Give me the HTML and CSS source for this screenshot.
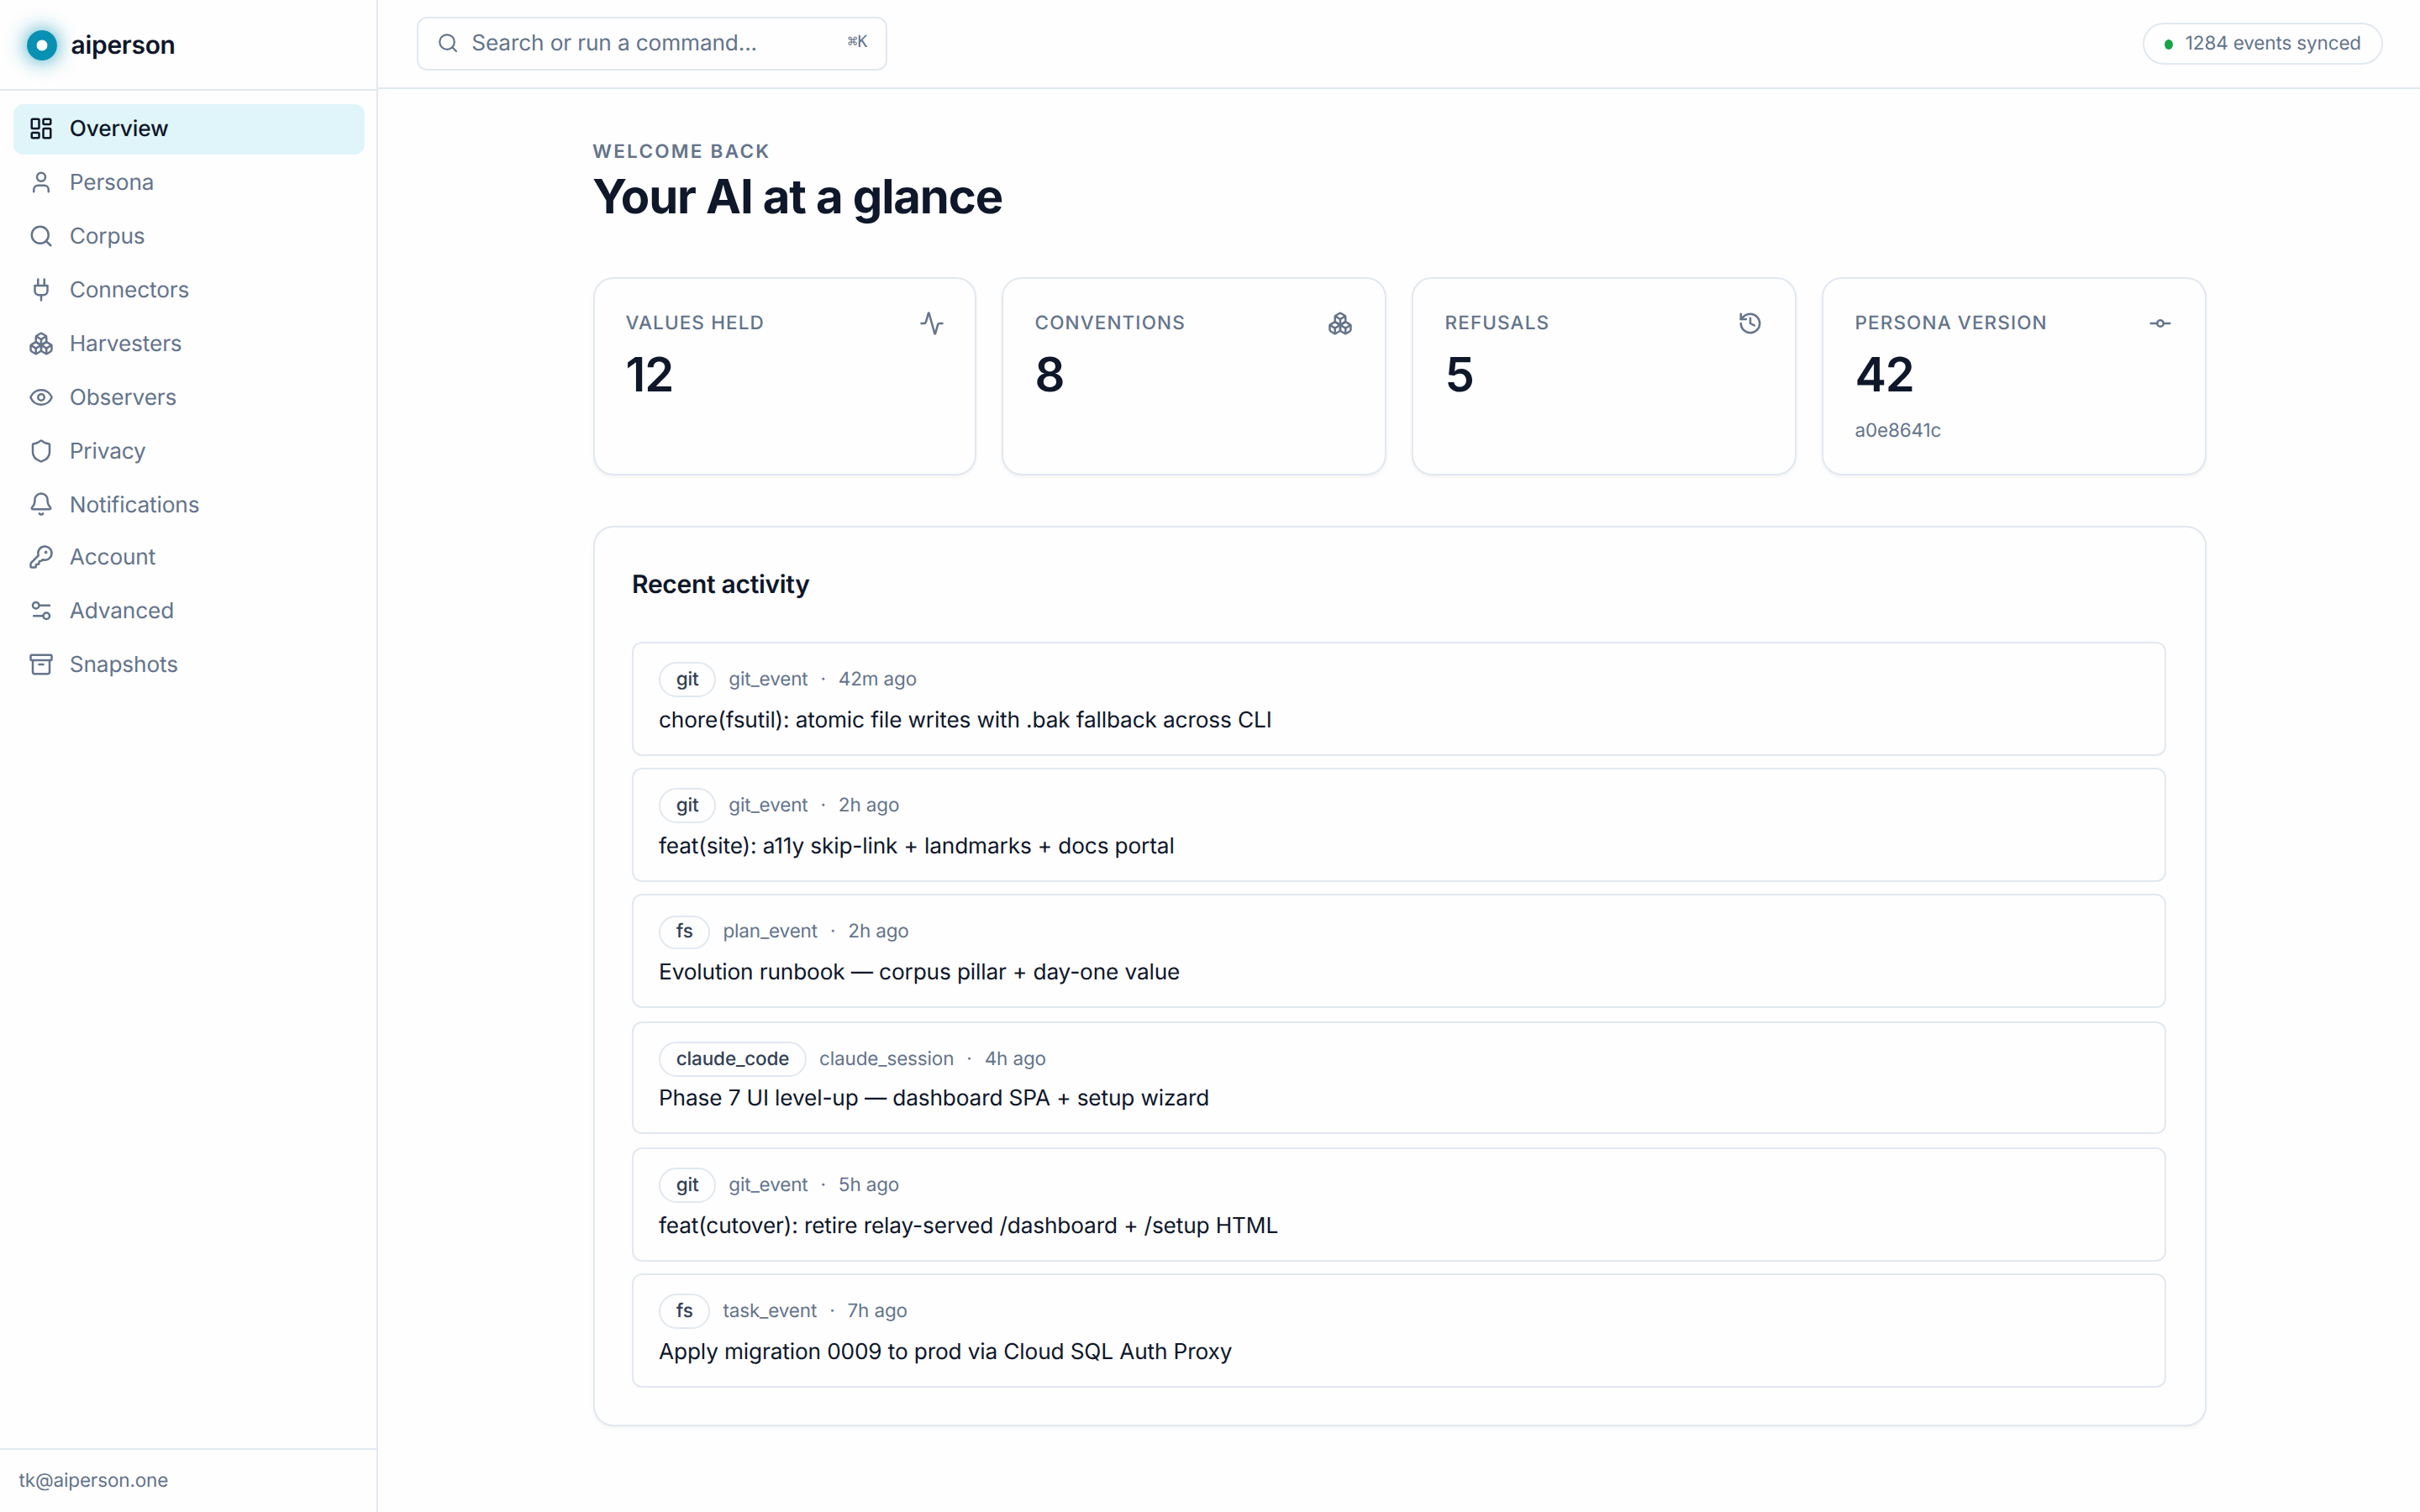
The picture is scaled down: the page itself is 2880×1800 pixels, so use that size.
FILE: index.html
```html
<!DOCTYPE html>
<html lang="en">
<head>
  <meta charset="UTF-8" />
  <meta name="viewport" content="width=device-width, initial-scale=1" />
  <title>aiperson</title>
  <link rel="stylesheet" href="styles.css">
</head>
<body>
  <div class="app">
    <aside class="sidebar">
      <div class="brand">
        <span class="brand-mark"></span>
        <span class="brand-name">aiperson</span>
      </div>
      <nav class="nav">
        <a class="nav-item active">
          <svg class="icon" viewBox="0 0 24 24"><rect width="7" height="9" x="3" y="3" rx="1"/><rect width="7" height="5" x="14" y="3" rx="1"/><rect width="7" height="9" x="14" y="12" rx="1"/><rect width="7" height="5" x="3" y="16" rx="1"/></svg>
          <span>Overview</span>
        </a>
        <a class="nav-item">
          <svg class="icon" viewBox="0 0 24 24"><path d="M19 21v-2a4 4 0 0 0-4-4H9a4 4 0 0 0-4 4v2"/><circle cx="12" cy="7" r="4"/></svg>
          <span>Persona</span>
        </a>
        <a class="nav-item">
          <svg class="icon" viewBox="0 0 24 24"><circle cx="11" cy="11" r="8"/><path d="m21 21-4.3-4.3"/></svg>
          <span>Corpus</span>
        </a>
        <a class="nav-item">
          <svg class="icon" viewBox="0 0 24 24"><path d="M12 22v-5"/><path d="M9 8V2"/><path d="M15 8V2"/><path d="M18 8v5a4 4 0 0 1-4 4h-4a4 4 0 0 1-4-4V8Z"/></svg>
          <span>Connectors</span>
        </a>
        <a class="nav-item">
          <svg class="icon" viewBox="0 0 24 24"><path d="M2.97 12.92A2 2 0 0 0 2 14.63v3.24a2 2 0 0 0 .97 1.71l3 1.8a2 2 0 0 0 2.06 0L12 19v-5.5l-5-3-4.03 2.42Z"/><path d="m7 16.5-4.74-2.85"/><path d="m7 16.5 5-3"/><path d="M7 16.5v5.17"/><path d="M12 13.5V19l3.97 2.38a2 2 0 0 0 2.06 0l3-1.8a2 2 0 0 0 .97-1.71v-3.24a2 2 0 0 0-.97-1.71L17 10.5l-5 3Z"/><path d="m17 16.5-5-3"/><path d="m17 16.5 4.74-2.85"/><path d="M17 16.5v5.17"/><path d="M7.97 4.42A2 2 0 0 0 7 6.13v4.37l5 3 5-3V6.13a2 2 0 0 0-.97-1.71l-3-1.8a2 2 0 0 0-2.06 0l-3 1.8Z"/><path d="M12 8 7.26 5.15"/><path d="m12 8 4.74-2.85"/><path d="M12 13.5V8"/></svg>
          <span>Harvesters</span>
        </a>
        <a class="nav-item">
          <svg class="icon" viewBox="0 0 24 24"><path d="M2.062 12.348a1 1 0 0 1 0-.696 10.75 10.75 0 0 1 19.876 0 1 1 0 0 1 0 .696 10.75 10.75 0 0 1-19.876 0"/><circle cx="12" cy="12" r="3"/></svg>
          <span>Observers</span>
        </a>
        <a class="nav-item">
          <svg class="icon" viewBox="0 0 24 24"><path d="M20 13c0 5-3.5 7.5-7.66 8.95a1 1 0 0 1-.67-.01C7.5 20.5 4 18 4 13V6a1 1 0 0 1 1-1c2 0 4.5-1.2 6.24-2.72a1.17 1.17 0 0 1 1.52 0C14.51 3.81 17 5 19 5a1 1 0 0 1 1 1z"/></svg>
          <span>Privacy</span>
        </a>
        <a class="nav-item">
          <svg class="icon" viewBox="0 0 24 24"><path d="M10.268 21a2 2 0 0 0 3.464 0"/><path d="M3.262 15.326A1 1 0 0 0 4 17h16a1 1 0 0 0 .74-1.673C19.41 13.956 18 12.499 18 8A6 6 0 0 0 6 8c0 4.499-1.411 5.956-2.738 7.326"/></svg>
          <span>Notifications</span>
        </a>
        <a class="nav-item">
          <svg class="icon" viewBox="0 0 24 24"><path d="M2.586 17.414A2 2 0 0 0 2 18.828V21a1 1 0 0 0 1 1h3a1 1 0 0 0 1-1v-1a1 1 0 0 1 1-1h1a1 1 0 0 0 1-1v-1a1 1 0 0 1 1-1h.172a2 2 0 0 0 1.414-.586l.814-.814a6.5 6.5 0 1 0-4-4z"/><circle cx="16.5" cy="7.5" r=".5" fill="currentColor"/></svg>
          <span>Account</span>
        </a>
        <a class="nav-item">
          <svg class="icon" viewBox="0 0 24 24"><path d="M20 7h-9"/><path d="M14 17H5"/><circle cx="17" cy="17" r="3"/><circle cx="7" cy="7" r="3"/></svg>
          <span>Advanced</span>
        </a>
        <a class="nav-item">
          <svg class="icon" viewBox="0 0 24 24"><rect width="20" height="5" x="2" y="3" rx="1"/><path d="M4 8v11a2 2 0 0 0 2 2h12a2 2 0 0 0 2-2V8"/><path d="M10 12h4"/></svg>
          <span>Snapshots</span>
        </a>
      </nav>
      <div class="sidebar-footer">tk@aiperson.one</div>
    </aside>

    <div class="page">
      <header class="topbar">
        <button class="search">
          <svg class="icon icon-sm" viewBox="0 0 24 24"><circle cx="11" cy="11" r="8"/><path d="m21 21-4.3-4.3"/></svg>
          <span>Search or run a command...</span>
          <kbd>⌘K</kbd>
        </button>
        <div class="sync"><span class="dot"></span>1284 events synced</div>
      </header>

      <main class="content">
        <p class="eyebrow">Welcome back</p>
        <h1>Your AI at a glance</h1>

        <section class="stats">
          <div class="card stat">
            <div class="stat-head">
              <span>Values held</span>
              <svg class="icon" viewBox="0 0 24 24"><path d="M22 12h-2.48a2 2 0 0 0-1.93 1.46l-2.35 8.36a.25.25 0 0 1-.48 0L9.24 2.18a.25.25 0 0 0-.48 0l-2.35 8.36A2 2 0 0 1 4.49 12H2"/></svg>
            </div>
            <div class="stat-value">12</div>
          </div>
          <div class="card stat">
            <div class="stat-head">
              <span>Conventions</span>
              <svg class="icon" viewBox="0 0 24 24"><path d="M2.97 12.92A2 2 0 0 0 2 14.63v3.24a2 2 0 0 0 .97 1.71l3 1.8a2 2 0 0 0 2.06 0L12 19v-5.5l-5-3-4.03 2.42Z"/><path d="m7 16.5-4.74-2.85"/><path d="m7 16.5 5-3"/><path d="M7 16.5v5.17"/><path d="M12 13.5V19l3.97 2.38a2 2 0 0 0 2.06 0l3-1.8a2 2 0 0 0 .97-1.71v-3.24a2 2 0 0 0-.97-1.71L17 10.5l-5 3Z"/><path d="m17 16.5-5-3"/><path d="m17 16.5 4.74-2.85"/><path d="M17 16.5v5.17"/><path d="M7.97 4.42A2 2 0 0 0 7 6.13v4.37l5 3 5-3V6.13a2 2 0 0 0-.97-1.71l-3-1.8a2 2 0 0 0-2.06 0l-3 1.8Z"/><path d="M12 8 7.26 5.15"/><path d="m12 8 4.74-2.85"/><path d="M12 13.5V8"/></svg>
            </div>
            <div class="stat-value">8</div>
          </div>
          <div class="card stat">
            <div class="stat-head">
              <span>Refusals</span>
              <svg class="icon" viewBox="0 0 24 24"><path d="M3 12a9 9 0 1 0 9-9 9.75 9.75 0 0 0-6.74 2.74L3 8"/><path d="M3 3v5h5"/><path d="M12 7v5l4 2"/></svg>
            </div>
            <div class="stat-value">5</div>
          </div>
          <div class="card stat">
            <div class="stat-head">
              <span>Persona version</span>
              <svg class="icon" viewBox="0 0 24 24"><circle cx="12" cy="12" r="3"/><path d="M3 12h6"/><path d="M15 12h6"/></svg>
            </div>
            <div class="stat-value">42</div>
            <div class="stat-hint">a0e8641c</div>
          </div>
        </section>

        <section class="card activity">
          <h2>Recent activity</h2>
          <ul class="events">
            <li class="event">
              <div class="event-meta"><span class="badge">git</span><span>git_event</span><span>·</span><span>42m ago</span></div>
              <p>chore(fsutil): atomic file writes with .bak fallback across CLI</p>
            </li>
            <li class="event">
              <div class="event-meta"><span class="badge">git</span><span>git_event</span><span>·</span><span>2h ago</span></div>
              <p>feat(site): a11y skip-link + landmarks + docs portal</p>
            </li>
            <li class="event">
              <div class="event-meta"><span class="badge">fs</span><span>plan_event</span><span>·</span><span>2h ago</span></div>
              <p>Evolution runbook — corpus pillar + day-one value</p>
            </li>
            <li class="event">
              <div class="event-meta"><span class="badge">claude_code</span><span>claude_session</span><span>·</span><span>4h ago</span></div>
              <p>Phase 7 UI level-up — dashboard SPA + setup wizard</p>
            </li>
            <li class="event">
              <div class="event-meta"><span class="badge">git</span><span>git_event</span><span>·</span><span>5h ago</span></div>
              <p>feat(cutover): retire relay-served /dashboard + /setup HTML</p>
            </li>
            <li class="event">
              <div class="event-meta"><span class="badge">fs</span><span>task_event</span><span>·</span><span>7h ago</span></div>
              <p>Apply migration 0009 to prod via Cloud SQL Auth Proxy</p>
            </li>
          </ul>
        </section>
      </main>
    </div>
  </div>
</body>
</html>
```

FILE: styles.css
```css
:root {
  --fg: #0f172a;
  --muted: #64748b;
  --border: #e2e8f0;
  --brand: #0891b2;
}

* { box-sizing: border-box; margin: 0; padding: 0; }
html { font-size: 30px; }
body {
  font-family: Inter, "Liberation Sans", sans-serif;
  font-size: 1rem; letter-spacing: -0.005em;
  text-rendering: geometricPrecision;
  background: #fefefe; color: var(--fg);
}
.app { display: flex; height: 100vh; overflow: hidden; }
.icon {
  width: 1rem; height: 1rem; flex: none;
  fill: none; stroke: currentColor; stroke-width: 2;
  stroke-linecap: round; stroke-linejoin: round;
}
.icon-sm { width: 0.875rem; height: 0.875rem; }

/* sidebar */
.sidebar { width: 450px; flex: none; display: flex; flex-direction: column; border-right: 2px solid var(--border); }
.brand { display: flex; align-items: center; gap: 16.5px; height: 108px; padding: 0 32px; border-bottom: 2px solid var(--border); }
.brand-mark {
  width: 36px; height: 36px; margin-top: 2px; border-radius: 50%;
  background: radial-gradient(circle, #fff 6px, var(--brand) 6.8px);
  box-shadow: 0 0 24px rgba(8, 145, 178, 0.85);
}
.brand-name { padding-top: 2px; font-size: 1rem; line-height: 36px; font-weight: 600; letter-spacing: -0.01em; }
.nav { flex: 1; display: flex; flex-direction: column; gap: 4px; padding: 16px 14px 0 16px; }
.nav-item {
  display: flex; align-items: center; gap: 0.625rem; height: 60px; padding: 0 18px;
  border-radius: 12px; font-size: 0.875rem; line-height: 37px; color: var(--muted);
}
.nav-item .icon { margin-bottom: 2px; }
.nav-item span { padding-bottom: 1px; }
.nav-item:nth-child(8) { height: 58px; }
.nav-item:nth-child(8) span { padding: 1px 0 0; }
.nav-item.active { background: #e0f5f9; color: var(--fg); font-weight: 500; }
.sidebar-footer { padding: 22px 22.5px 23px; border-top: 2px solid var(--border); font-size: 0.75rem; line-height: 29px; color: var(--muted); }

/* top bar */
.page { flex: 1; min-width: 0; }
.topbar { display: flex; align-items: center; justify-content: space-between; height: 106px; padding: 0 44px 0 46px; border-bottom: 2px solid var(--border); }
.search {
  display: flex; align-items: center; gap: 15px; width: 560px; height: 64px; padding: 0 22px;
  background: none; border: 2px solid var(--border); border-radius: 12px;
  font: inherit; font-size: 0.875rem; line-height: 31px; letter-spacing: inherit; text-rendering: inherit; color: var(--muted);
}
.search .icon { margin-bottom: 2px; }
.search span { padding-bottom: 1px; }
.search kbd { margin-left: auto; padding-bottom: 5px; font-family: "DejaVu Sans Mono", monospace; font-size: 0.65rem; }
.sync {
  display: flex; align-items: center; gap: 15px; height: 50px; padding: 0 24px 1px;
  border: 2px solid var(--border); border-radius: 999px; font-size: 0.75rem; line-height: 27px; color: var(--muted);
}
.dot { width: 10px; height: 12px; margin-top: 3px; border-radius: 50%; background: #16a34a; }

/* content */
.content { padding: 60px 254px 0 256px; }
.eyebrow { margin-left: -1px; font-size: 0.75rem; line-height: 29px; font-weight: 600; letter-spacing: 0.1em; text-transform: uppercase; color: var(--muted); }
h1 { margin: 5px 0 0 -1px; font-size: 1.875rem; line-height: 68px; font-weight: 700; letter-spacing: -0.02em; }
.card { border: 2px solid var(--border); border-radius: 24px; background: #fefefe; box-shadow: 0 2px 4px rgba(15, 23, 42, 0.05); }

.stats { display: grid; grid-template-columns: 456px repeat(3, 458px); gap: 30px; margin-top: 62px; }
.stat { height: 236px; padding: 38px 38px 0 37.5px; }
.stat:first-child { padding-left: 36.5px; padding-right: 36px; }
.stat-head { display: flex; justify-content: space-between; font-size: 0.75rem; line-height: 29px; font-weight: 500; letter-spacing: 0.05em; text-transform: uppercase; color: var(--muted); }
.stat-value { margin-top: 8px; font-size: 1.875rem; line-height: 76px; font-weight: 600; letter-spacing: -0.02em; }
.stat-hint { margin-top: 14px; font-size: 0.75rem; line-height: 29px; color: var(--muted); }

.activity { margin-top: 60px; padding: 45px 46px 44px 44px; }
h2 { font-size: 1rem; line-height: 46px; font-weight: 600; letter-spacing: -0.01em; }
.events { display: flex; flex-direction: column; gap: 14px; margin-top: 45px; list-style: none; }
.event { height: 136px; padding: 22px 30px; border: 2px solid var(--border); border-radius: 12px; }
.event-meta { display: flex; align-items: baseline; gap: 15px; height: 42px; font-size: 0.75rem; line-height: 37px; color: var(--muted); }
.badge { height: 42px; padding: 0 0.625rem; border: 2px solid var(--border); border-radius: 999px; font-weight: 500; color: #334155; }
.event p { margin-top: 8px; font-size: 0.875rem; line-height: 39px; }
.event:nth-child(3) .badge { height: 40px; margin-top: 2px; line-height: 33px; }
.event:nth-child(4) { height: 134px; margin-top: 2px; }
.event:nth-child(4) p { margin-top: 6px; }
.event:nth-child(5) { margin-top: 2px; }
```
